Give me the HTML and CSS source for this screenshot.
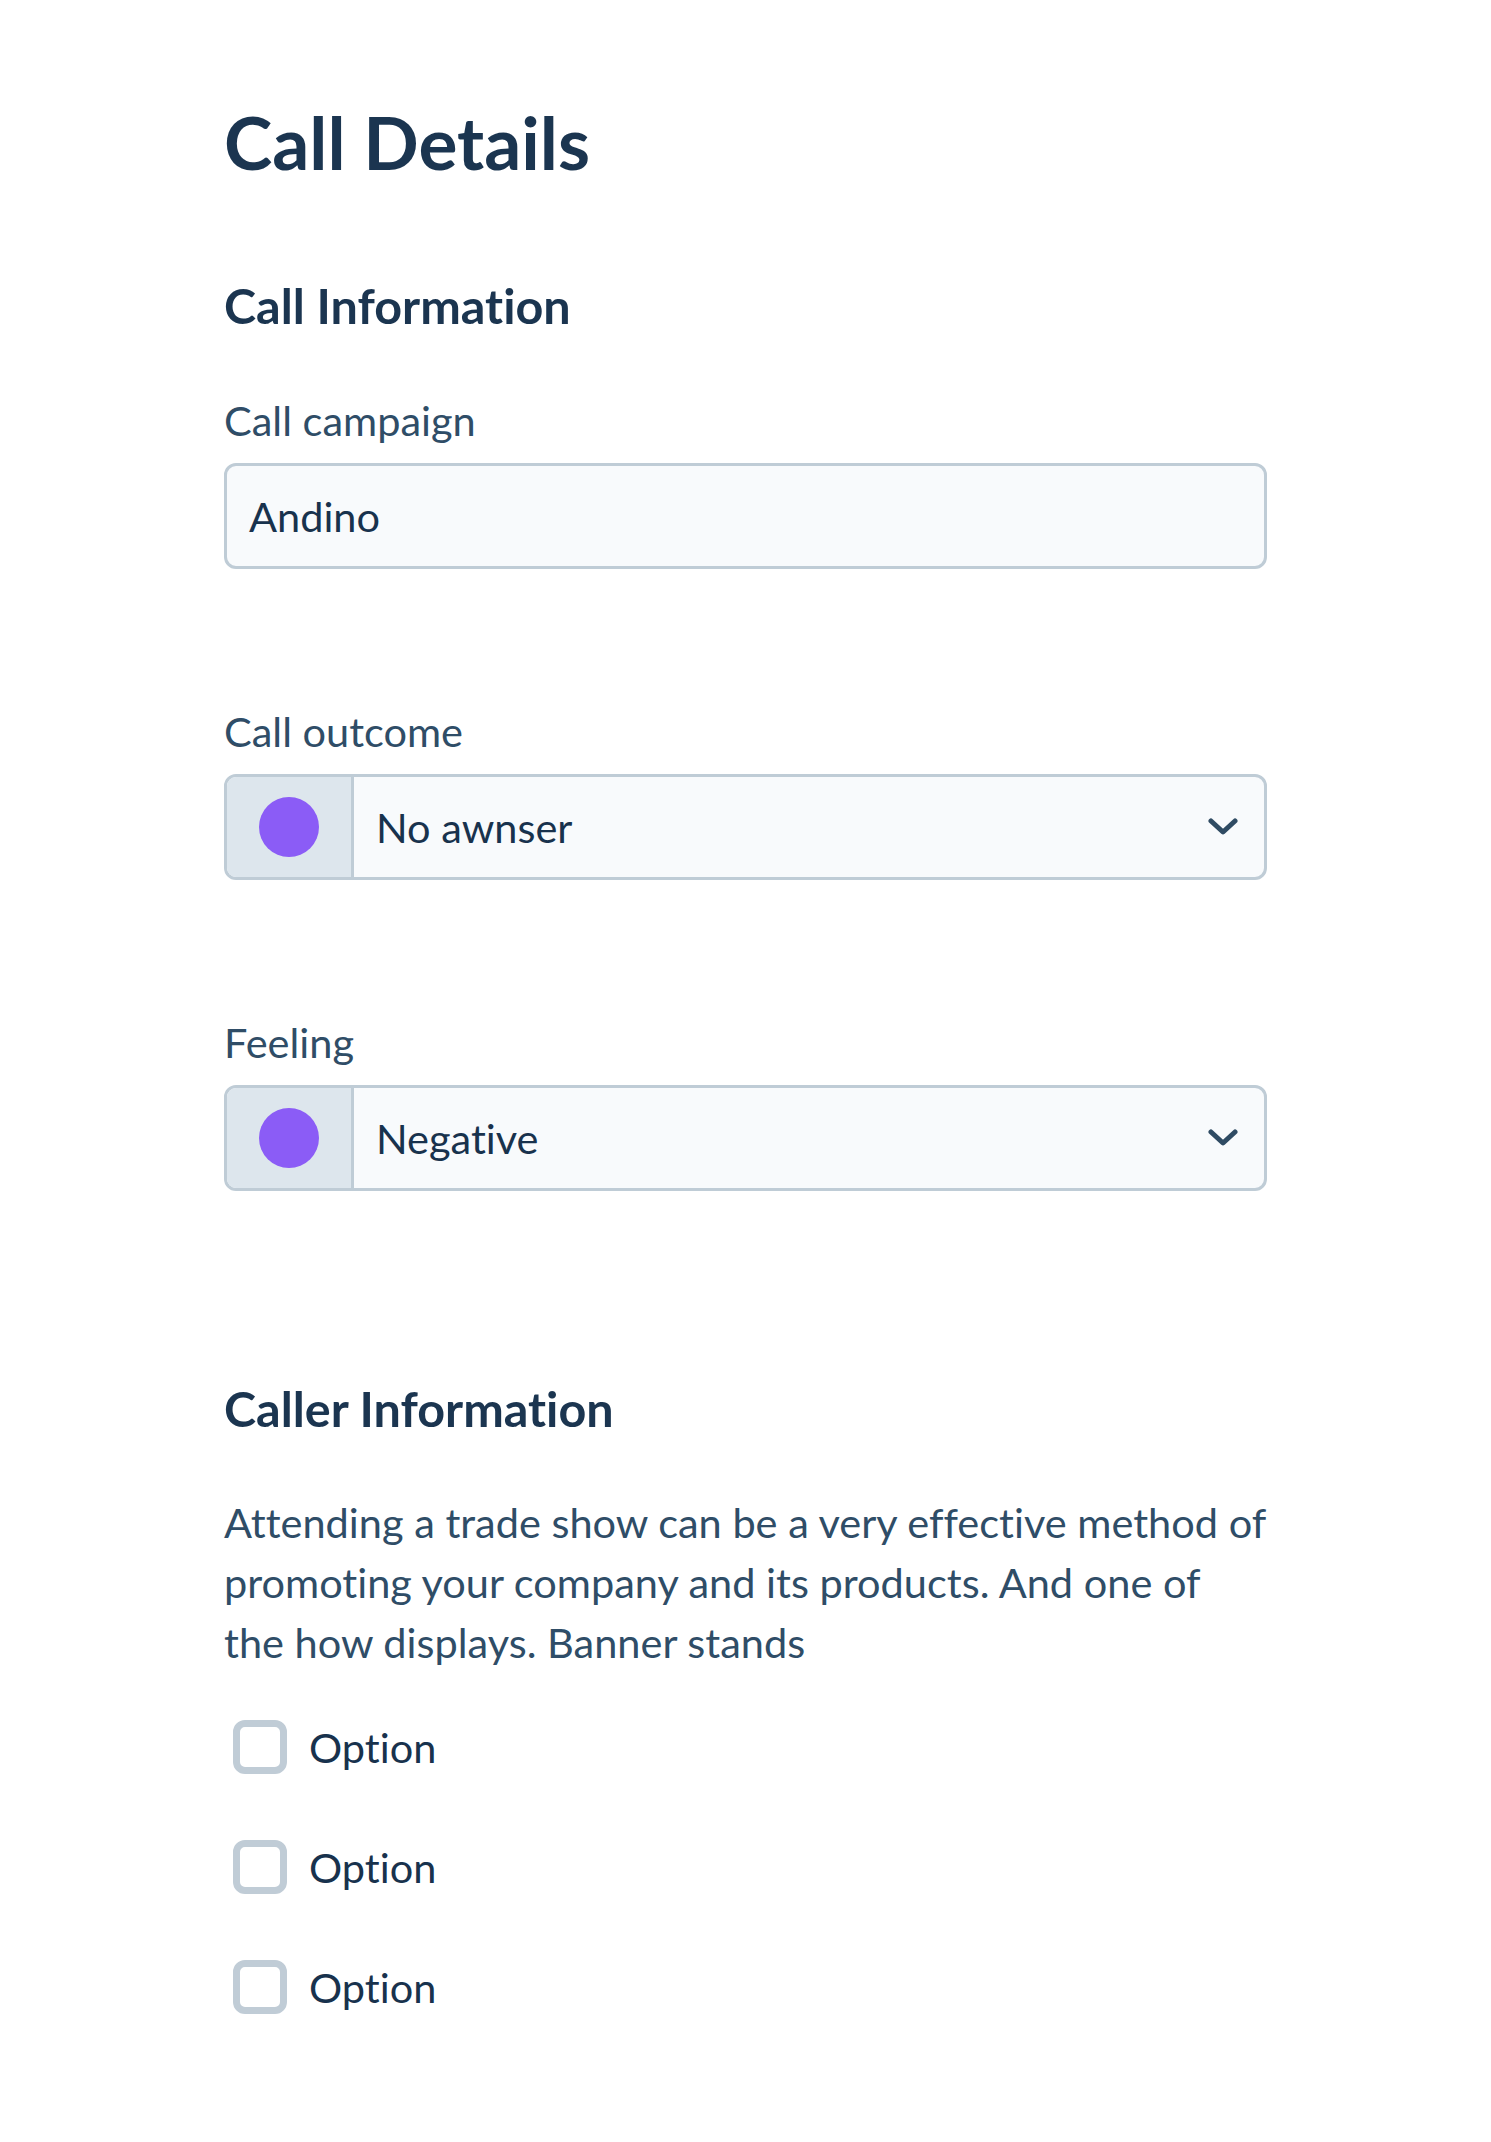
FILE: index.html
```html
<!DOCTYPE html>
<html lang="en">
<head>
<meta charset="utf-8">
<title>Call Details</title>
<link rel="stylesheet" href="styles.css">
</head>
<body>
<main class="page">
  <h1 class="title">Call Details</h1>

  <section class="section">
    <h2 class="section-title">Call Information</h2>

    <div class="field">
      <div class="label">Call campaign</div>
      <div class="input">Andino</div>
    </div>

    <div class="field">
      <div class="label">Call outcome</div>
      <div class="select">
        <div class="swatch"><span class="dot"></span></div>
        <div class="select-value">No awnser</div>
        <svg class="chevron" width="30" height="18" viewBox="0 0 30 18" aria-hidden="true"><path d="M3 3 L15 14 L27 3" fill="none" stroke="#2f4b63" stroke-width="5" stroke-linecap="round" stroke-linejoin="round"/></svg>
      </div>
    </div>

    <div class="field">
      <div class="label">Feeling</div>
      <div class="select">
        <div class="swatch"><span class="dot"></span></div>
        <div class="select-value">Negative</div>
        <svg class="chevron" width="30" height="18" viewBox="0 0 30 18" aria-hidden="true"><path d="M3 3 L15 14 L27 3" fill="none" stroke="#2f4b63" stroke-width="5" stroke-linecap="round" stroke-linejoin="round"/></svg>
      </div>
    </div>
  </section>

  <section class="section caller">
    <h2 class="section-title">Caller Information</h2>
    <p class="desc">Attending a trade show can be a very effective method of promoting your company and its products. And one of the how displays. Banner stands</p>
    <div class="options">
      <label class="option"><span class="box"></span><span class="option-text">Option</span></label>
      <label class="option"><span class="box"></span><span class="option-text">Option</span></label>
      <label class="option"><span class="box"></span><span class="option-text">Option</span></label>
    </div>
  </section>
</main>
</body>
</html>
```

FILE: styles.css
```css
* { box-sizing: border-box; }

html, body {
  margin: 0;
  padding: 0;
  background: #ffffff;
}

body {
  font-family: Lato, "Open Sans", "Liberation Sans", sans-serif;
  color: #1a3350;
  font-variant-ligatures: none;
  font-feature-settings: "liga" 0, "clig" 0;
}

.page {
  width: 1043px;
  margin: 0 auto;
  padding: 98px 0 80px;
}

.title {
  margin: 0;
  font-size: 73px;
  line-height: 89px;
  font-weight: 700;
  color: #1b3550;
}

.section-title {
  margin: 0;
  font-size: 48.5px;
  line-height: 58px;
  font-weight: 700;
  color: #1b3550;
}

.section {
  margin-top: 89px;
}

.field {
  margin-top: 56px;
}

.field + .field {
  margin-top: 132px;
}

.label {
  font-size: 41.5px;
  line-height: 60px;
  color: #2f4d67;
}

.input {
  margin-top: 13px;
  height: 106px;
  border: 3px solid #bfccd6;
  border-radius: 12px;
  background: #f8fafc;
  padding: 0 22px;
  display: flex;
  align-items: center;
  font-size: 41.5px;
  color: #18324d;
}

.select {
  margin-top: 13px;
  height: 106px;
  border: 3px solid #bfccd6;
  border-radius: 12px;
  background: #f8fafc;
  display: flex;
  align-items: center;
  overflow: hidden;
}

.swatch {
  width: 127px;
  height: 100%;
  background: #dde6ed;
  border-right: 3px solid #bfccd6;
  display: flex;
  align-items: center;
  justify-content: center;
}

.dot {
  width: 60px;
  height: 60px;
  border-radius: 50%;
  background: #8b5cf6;
}

.select-value {
  flex: 1;
  padding-left: 22px;
  font-size: 41.5px;
  color: #18324d;
}

.chevron {
  margin-right: 26px;
  flex: none;
}

.caller {
  margin-top: 188px;
}

.desc {
  margin: 55px 0 0;
  font-size: 41.5px;
  line-height: 60px;
  color: #2f4d67;
}

.options {
  margin-top: 45px;
  display: flex;
  flex-direction: column;
  gap: 60px;
}

.option {
  display: flex;
  align-items: center;
  height: 60px;
  padding-left: 9px;
}

.box {
  width: 54px;
  height: 54px;
  border: 7px solid #c0ccd6;
  border-radius: 12px;
  background: #ffffff;
  flex: none;
}

.option-text {
  margin-left: 22px;
  font-size: 41.5px;
  line-height: 60px;
  color: #18324d;
}
```
